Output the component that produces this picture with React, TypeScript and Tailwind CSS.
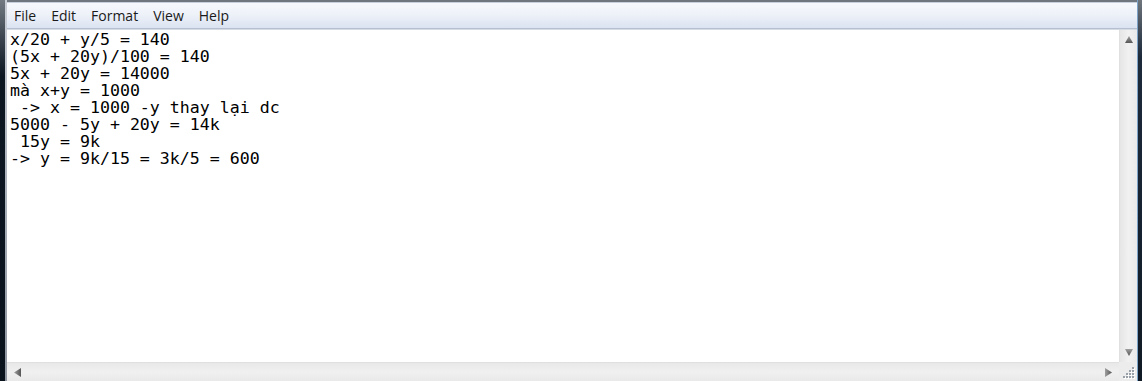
import React from 'react';

const lines = [
  'x/20 + y/5 = 140',
  '(5x + 20y)/100 = 140',
  '5x + 20y = 14000',
  'mà x+y = 1000',
  ' -> x = 1000 -y thay lại dc',
  '5000 - 5y + 20y = 14k',
  ' 15y = 9k',
  '-> y = 9k/15 = 3k/5 = 600',
];

const menus = ['File', 'Edit', 'Format', 'View', 'Help'];

const Arrow = ({ dir }: { dir: 'up' | 'down' | 'left' | 'right' }) => {
  const vertical = dir === 'up' || dir === 'down';
  const pts = {
    up: '0,7 8,7 4,0',
    down: '0,0 8,0 4,7',
    left: '7,0 7,9 0,4.5',
    right: '0,0 0,9 7,4.5',
  }[dir];
  const w = vertical ? 8 : 7;
  const h = vertical ? 7 : 9;
  return (
    <svg width={w} height={h} viewBox={`0 0 ${w} ${h}`}>
      <defs>
        <linearGradient id={`g-${dir}`} x1="0" y1="0" x2={vertical ? '0' : '1'} y2={vertical ? '1' : '0'}>
          <stop offset="0" stopColor="#a0a0a0" />
          <stop offset="1" stopColor="#555555" />
        </linearGradient>
      </defs>
      <polygon points={pts} fill={`url(#g-${dir})`} />
    </svg>
  );
};

const Grip = () => (
  <svg width="12" height="12" viewBox="0 0 12 12">
    {[
      [9, 0], [9, 3], [6, 3], [9, 6], [6, 6], [3, 6], [9, 9], [6, 9], [3, 9], [0, 9],
    ].map(([x, y], i) => (
      <g key={i}>
        <rect x={x + 1} y={y + 1} width="2" height="2" fill="#ffffff" />
        <rect x={x} y={y} width="2" height="2" fill="#9aa0a8" />
      </g>
    ))}
  </svg>
);

export default function App() {
  return (
    <div className="w-[1142px] h-[381px] flex overflow-hidden bg-[#0a121c]">
      {/* left frame */}
      <div className="w-[7px] h-full flex">
        <div className="w-[5px] h-full bg-gradient-to-b from-[#737a82] via-[#0d1722] via-[20%] to-[#0a121c]" />
        <div className="w-[2px] h-full bg-gradient-to-b from-[#c9ced6] to-[#8e959e]" />
      </div>

      <div className="flex-1 flex flex-col">
        {/* top frame */}
        <div className="h-[3px] bg-[#6f767d] border-b border-[#c8d0dc]" />

        {/* menu bar */}
        <div className="h-[26px] flex items-center pl-[7px] gap-[15px] bg-gradient-to-b from-[#f6f8fc] via-[#eef2f9] via-[45%] to-[#dbe3f1] border-b border-[#b6bfcf] font-['Open_Sans',sans-serif] text-[14px] text-[#1a1a1a]">
          {menus.map((m) => (
            <span key={m}>{m}</span>
          ))}
        </div>

        {/* edit area */}
        <div className="flex-1 flex border-t border-[#d6dbe4]">
          <div className="flex-1 bg-white pl-[3px] pt-[1px] font-['DejaVu_Sans_Mono',monospace] text-[16.6px] leading-[17px] text-black whitespace-pre">
            {lines.map((l, i) => (
              <div key={i}>{l}</div>
            ))}
          </div>
          <div className="w-[18px] bg-gradient-to-r from-[#e6e6e6] via-[#f1f1f1] to-[#e9e9e9] border-l border-[#e0e0e0] flex flex-col items-center justify-between py-[6px]">
            <Arrow dir="up" />
            <Arrow dir="down" />
          </div>
        </div>

        {/* horizontal scroll */}
        <div className="h-[19px] flex">
          <div className="flex-1 bg-gradient-to-b from-[#e8e8e8] via-[#f0f0f0] to-[#e9e9e9] border-t border-[#e0e0e0] flex items-center justify-between px-[7px]">
            <Arrow dir="left" />
            <Arrow dir="right" />
          </div>
          <div className="w-[18px] bg-[#ececec] flex items-end justify-end p-[2px]">
            <Grip />
          </div>
        </div>
      </div>

      {/* right frame */}
      <div className="w-[5px] h-full flex">
        <div className="w-[1px] h-full bg-[#7ea3c8]" />
        <div className="flex-1 h-full bg-gradient-to-b from-[#6f767d] via-[#1d2a3a] via-[15%] to-[#101a26]" />
      </div>
    </div>
  );
}
